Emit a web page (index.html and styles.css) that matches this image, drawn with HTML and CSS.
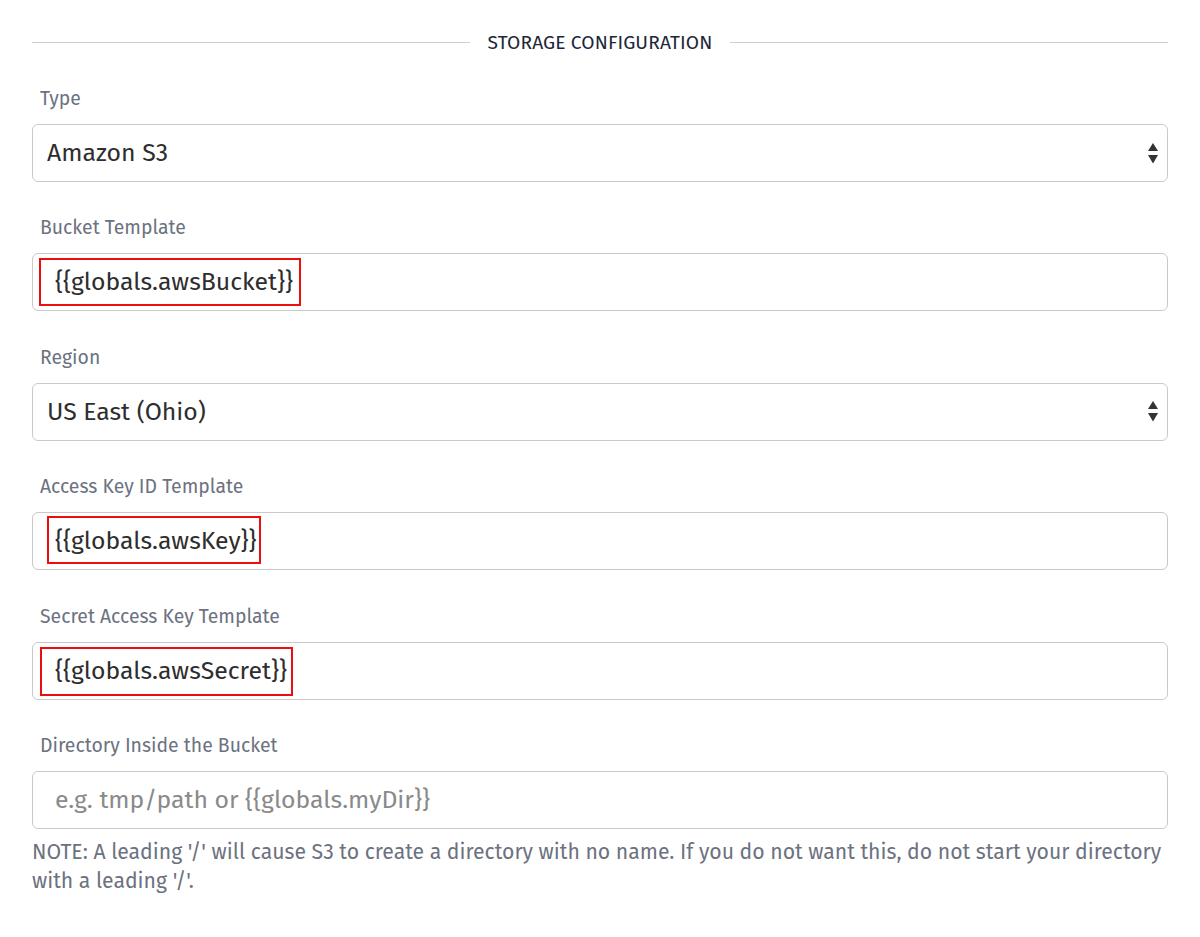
FILE: index.html
```html
<!DOCTYPE html>
<html>
<head>
<meta charset="utf-8">
<link rel="stylesheet" href="styles.css">
</head>
<body>
<div class="page">
  <div class="section-title"><span class="rule"></span><span class="title-text">STORAGE CONFIGURATION</span><span class="rule"></span></div>

  <div class="field first">
    <div class="label">Type</div>
    <div class="control select"><span class="value">Amazon S3</span>
      <svg class="arrows" width="10" height="21" viewBox="0 0 10 21"><path d="M5 0 L10 8 L0 8 Z" fill="#333"/><path d="M0 12 L10 12 L5 20.5 Z" fill="#333"/></svg>
    </div>
  </div>

  <div class="field">
    <div class="label">Bucket Template</div>
    <div class="control"><span class="value">{{globals.awsBucket}}</span><span class="mark mark-bucket"></span></div>
  </div>

  <div class="field">
    <div class="label">Region</div>
    <div class="control select"><span class="value">US East (Ohio)</span>
      <svg class="arrows" width="10" height="21" viewBox="0 0 10 21"><path d="M5 0 L10 8 L0 8 Z" fill="#333"/><path d="M0 12 L10 12 L5 20.5 Z" fill="#333"/></svg>
    </div>
  </div>

  <div class="field">
    <div class="label">Access Key ID Template</div>
    <div class="control"><span class="value">{{globals.awsKey}}</span><span class="mark mark-key"></span></div>
  </div>

  <div class="field">
    <div class="label">Secret Access Key Template</div>
    <div class="control"><span class="value">{{globals.awsSecret}}</span><span class="mark mark-secret"></span></div>
  </div>

  <div class="field">
    <div class="label">Directory Inside the Bucket</div>
    <div class="control"><span class="value placeholder">e.g. tmp/path or {{globals.myDir}}</span></div>
    <div class="note">NOTE: A leading '/' will cause S3 to create a directory with no name. If you do not want this, do not start your directory with a leading '/'.</div>
  </div>
</div>
</body>
</html>
```

FILE: styles.css
```css
html, body {
  margin: 0;
  padding: 0;
  background: #ffffff;
}
body {
  font-family: "Fira Sans", "Open Sans", "Liberation Sans", sans-serif;
}
.page {
  padding: 31px 32px 0 32px;
}
.section-title {
  display: flex;
  align-items: center;
  gap: 18px;
  height: 22px;
}
.rule {
  flex: 1;
  height: 1px;
  background: #cfcfcf;
}
.title-text {
  font-size: 19.2px;
  color: #1e2738;
  letter-spacing: 0.1px;
}
.field.first {
  margin-top: 33px;
}
.field {
  margin-top: 33.4px;
}
.label {
  font-size: 19.4px;
  color: #6c7280;
  line-height: 26px;
  padding-left: 8px;
  margin-bottom: 12px;
}
.control {
  position: relative;
  box-sizing: border-box;
  height: 58px;
  border: 1px solid #c9c9c9;
  border-radius: 6px;
  display: flex;
  align-items: center;
  padding-left: 22px;
}
.control.select {
  padding-left: 14px;
  padding-right: 9px;
  justify-content: space-between;
}
.value {
  font-size: 24.8px;
  color: #2e2e2e;
}
.placeholder {
  color: #8a8a8a;
}
.arrows {
  display: block;
}
.mark {
  position: absolute;
  border: 2px solid #ee0d0d;
}
.mark-bucket {
  left: 6px;
  top: 4px;
  width: 258px;
  height: 44px;
}
.mark-key {
  left: 14px;
  top: 3px;
  width: 210px;
  height: 44px;
}
.mark-secret {
  left: 7px;
  top: 4px;
  width: 249px;
  height: 45px;
}
.note {
  margin-top: 9px;
  font-size: 21.2px;
  line-height: 29px;
  color: #6c7280;
}
```
